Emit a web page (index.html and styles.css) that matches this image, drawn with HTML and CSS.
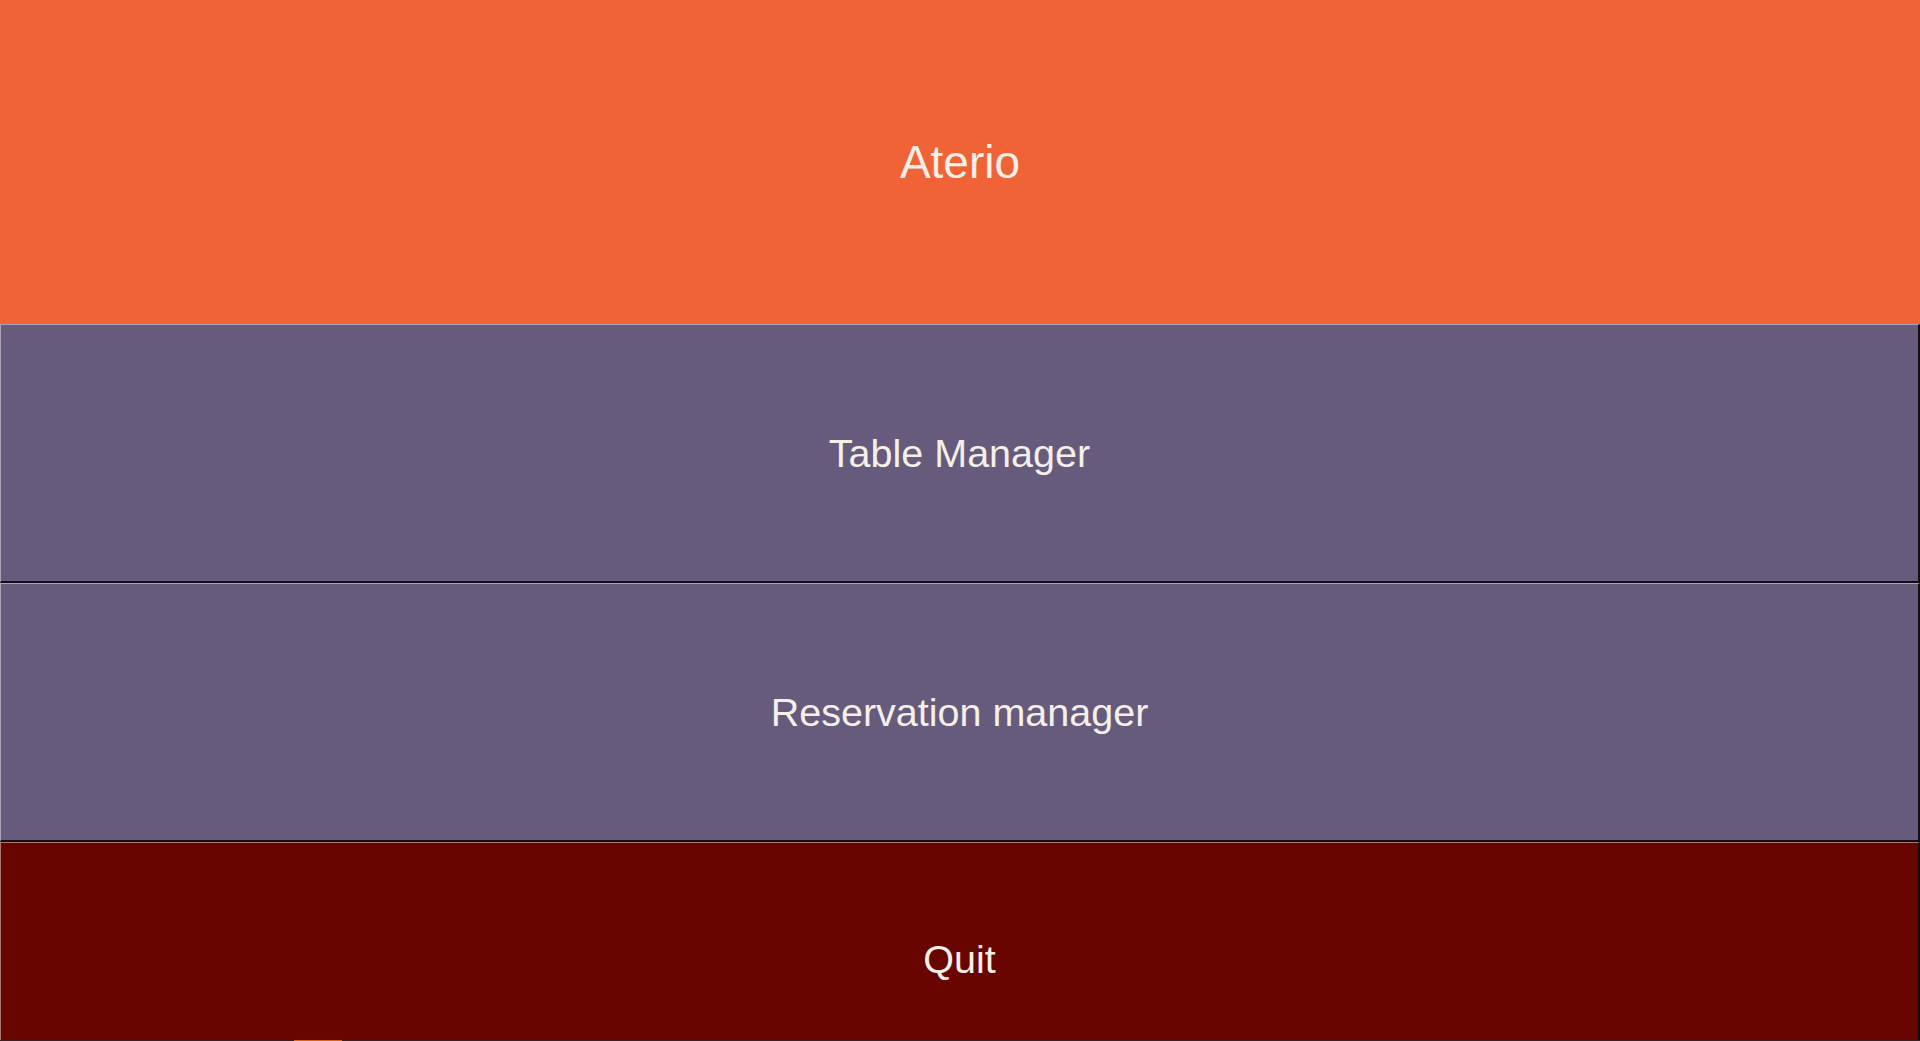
FILE: index.html
```html
<!DOCTYPE html>
<html lang="en">
<head>
<meta charset="utf-8">
<title>Aterio</title>
<link rel="stylesheet" href="styles.css">
</head>
<body>
<div class="app">
  <header class="title-bar"><h1 class="title">Aterio</h1></header>
  <button class="menu-btn menu-btn--nav">Table Manager</button>
  <button class="menu-btn menu-btn--nav">Reservation manager</button>
  <button class="menu-btn menu-btn--quit">Quit</button>
</div>
<div class="edge-strip"><span class="edge-mark"></span></div>
</body>
</html>
```
FILE: styles.css
```css
html, body {
  margin: 0;
  padding: 0;
  height: 100%;
  overflow: hidden;
  background: #690500;
}
.app {
  display: flex;
  flex-direction: column;
  height: 1041px;
  overflow: hidden;
  font-family: "Liberation Sans", Arial, sans-serif;
}
.title-bar {
  flex: 0 0 324px;
  background: #f06337;
  display: flex;
  align-items: center;
  justify-content: center;
}
.title {
  margin: 0;
  font-weight: normal;
  font-size: 46px;
  color: #f4efe7;
}
.menu-btn {
  flex: 0 0 259px;
  box-sizing: border-box;
  margin: 0;
  padding: 0;
  width: 100%;
  font-family: "Liberation Sans", Arial, sans-serif;
  font-size: 39.5px;
  color: #f4efe7;
  border-style: solid;
  border-width: 1px 2px 2px 1px;
  border-color: rgba(255,255,255,0.45) #101010 #101010 rgba(255,255,255,0.45);
  cursor: pointer;
}
.menu-btn--nav {
  background: #665b7c;
}
.menu-btn--quit {
  flex: 0 0 236px;
  background: #690500;
}
.edge-strip {
  position: fixed;
  left: 0;
  right: 0;
  bottom: 0;
  height: 1px;
  background: #3a2020;
}
.edge-mark {
  position: absolute;
  left: 294px;
  width: 48px;
  top: 0;
  height: 1px;
  background: #d2691e;
}
```
